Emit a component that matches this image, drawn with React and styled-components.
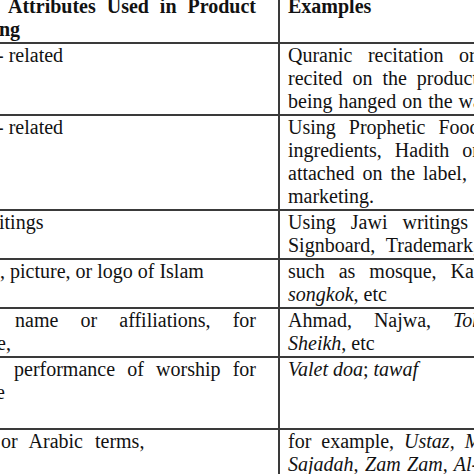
import React from "react";
import styled, { createGlobalStyle } from "styled-components";

const Global = createGlobalStyle`
  html, body { margin: 0; padding: 0; background: #fff; }
  body { width: 474px; height: 474px; overflow: hidden; }
`;

const Page = styled.div`
  width: 474px;
  height: 474px;
  overflow: hidden;
  background: #fff;
  font-family: "Liberation Serif", "Times New Roman", serif;
  font-size: 20px;
  color: #121212;
`;

const Table = styled.div`
  display: flex;
  flex-direction: column;
  width: 660px;
  margin-top: -7px;
`;

const Row = styled.div`
  display: grid;
  grid-template-columns: 280px 1fr;
  border-top: 2px solid #3a3a3a;
  font-weight: ${(p) => (p.$head ? 700 : 400)};
`;

const LeftCell = styled.div`
  box-sizing: border-box;
  border-right: 2px solid #3a3a3a;
  padding: 0 22px 1px 0;
  overflow: hidden;
`;

const RightCell = styled.div`
  padding: 0 0 1px 8px;
  overflow: hidden;
`;

const Line = styled.div`
  height: 23px;
  line-height: 23px;
  white-space: nowrap;
  margin-left: ${(p) => p.$indent || 0}px;
  word-spacing: ${(p) => p.$ws || 0}px;
`;

const JustLine = styled.div`
  height: 23px;
  line-height: 23px;
  margin-left: ${(p) => p.$indent || 0}px;
  text-align: justify;
  text-align-last: justify;
`;

const Em = styled.i`
  font-style: italic;
`;

export default function App() {
  return (
    <Page>
      <Global />
      <Table>
        <Row $head>
          <LeftCell>
            <JustLine $indent={8}>Attributes Used in Product</JustLine>
            <Line $indent={-1}>ng</Line>
          </LeftCell>
          <RightCell>
            <Line>Examples</Line>
          </RightCell>
        </Row>

        <Row>
          <LeftCell>
            <Line $indent={-3}>- related</Line>
            <Line>&nbsp;</Line>
            <Line>&nbsp;</Line>
          </LeftCell>
          <RightCell>
            <Line $ws={10.5}>Quranic recitation or doa</Line>
            <Line $ws={5}>recited on the product, or</Line>
            <Line $ws={1}>being hanged on the wall</Line>
          </RightCell>
        </Row>

        <Row>
          <LeftCell>
            <Line $indent={-3}>- related</Line>
            <Line>&nbsp;</Line>
            <Line>&nbsp;</Line>
            <Line>&nbsp;</Line>
          </LeftCell>
          <RightCell>
            <Line $ws={8}>Using Prophetic Food as</Line>
            <Line $ws={8}>ingredients, Hadith or</Line>
            <Line $ws={3}>attached on the label, for</Line>
            <Line>marketing.</Line>
          </RightCell>
        </Row>

        <Row>
          <LeftCell>
            <Line $indent={-1}>itings</Line>
            <Line>&nbsp;</Line>
          </LeftCell>
          <RightCell>
            <Line $ws={10}>Using Jawi writings on</Line>
            <Line $ws={6}>Signboard, Trademark,</Line>
          </RightCell>
        </Row>

        <Row>
          <LeftCell>
            <Line $indent={0}>, picture, or logo of Islam</Line>
            <Line>&nbsp;</Line>
          </LeftCell>
          <RightCell>
            <Line $ws={9}>such as mosque, Ka'bah,</Line>
            <Line>
              <Em>songkok</Em>, etc
            </Line>
          </RightCell>
        </Row>

        <Row>
          <LeftCell>
            <JustLine $indent={15}>name or affiliations, for</JustLine>
            <Line $indent={-3}>e,</Line>
          </LeftCell>
          <RightCell>
            <Line $ws={17}>
              Ahmad, Najwa, <Em>Tok Guru,</Em>
            </Line>
            <Line>
              <Em>Sheikh</Em>, etc
            </Line>
          </RightCell>
        </Row>

        <Row>
          <LeftCell>
            <JustLine $indent={14}>performance of worship for</JustLine>
            <Line $indent={-4}>e</Line>
            <Line>&nbsp;</Line>
          </LeftCell>
          <RightCell>
            <Line>
              <Em>Valet doa</Em>; <Em>tawaf</Em>
            </Line>
            <Line>&nbsp;</Line>
            <Line>&nbsp;</Line>
          </RightCell>
        </Row>

        <Row>
          <LeftCell>
            <Line $indent={1} $ws={7}>or Arabic terms,</Line>
            <Line>&nbsp;</Line>
          </LeftCell>
          <RightCell>
            <Line $ws={5}>
              for example, <Em>Ustaz, Mufti,</Em>
            </Line>
            <Line $ws={1.5}>
              <Em>Sajadah, Zam Zam, Al-Quran</Em>
            </Line>
          </RightCell>
        </Row>
      </Table>
    </Page>
  );
}
